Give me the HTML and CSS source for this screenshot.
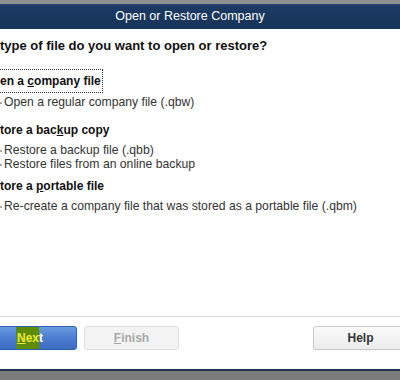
FILE: index.html
```html
<!DOCTYPE html>
<html lang="en">
<head>
    <meta charset="UTF-8">
    <title>Open or Restore Company</title>
    <link rel="stylesheet" href="styles.css">
</head>
<body>
    <div class="top-strip"></div>
    <div class="title-bar">Open or Restore Company</div>

    <div class="content">
        <h2 class="question">type of file do you want to open or restore?</h2>

        <div class="group group-first">
            <div class="group-title"><span class="focus">en a <u>c</u>ompany file</span></div>
            <div class="item">Open a regular company file (.qbw)</div>
        </div>

        <div class="group group-second">
            <div class="group-title">tore a bac<u>k</u>up copy</div>
            <div class="item">Restore a backup file (.qbb)</div>
            <div class="item">Restore files from an online backup</div>
        </div>

        <div class="group">
            <div class="group-title">tore a <u>p</u>ortable file</div>
            <div class="item">Re-create a company file that was stored as a portable file (.qbm)</div>
        </div>
    </div>

    <div class="footer">
        <button class="btn btn-next"><span class="hl"><u>N</u>ex</span>t</button>
        <button class="btn btn-disabled"><u>F</u>inish</button>
        <button class="btn btn-help">Help</button>
    </div>

    <div class="bottom-strip"></div>
</body>
</html>
```

FILE: styles.css
```css
html, body {
    margin: 0;
    height: 380px;
    overflow: hidden;
}
body {
    display: flex;
    flex-direction: column;
    background: #ffffff;
    font-family: 'Liberation Sans', Arial, sans-serif;
    color: #222222;
}
.top-strip {
    height: 4px;
    background: #8f8f8f;
}
.title-bar {
    height: 25px;
    line-height: 25px;
    text-align: center;
    color: #ffffff;
    font-size: 12.5px;
    padding-right: 20px;
    background: linear-gradient(#2c4b74 0, #1c3a62 2px, #17345a 100%);
}
.content {
    flex: 1;
}
.question {
    margin: 9px 0 0 0;
    font-size: 13px;
    line-height: 16px;
    font-weight: bold;
    color: #111111;
}
.group {
    margin-top: 4px;
}
.group-first {
    margin-top: 16px;
}
.group-second {
    margin-top: 10px;
}
.group-title {
    height: 22px;
    line-height: 22px;
    font-size: 12px;
    font-weight: bold;
    color: #111111;
    margin-bottom: 2px;
}
.group-first .group-title {
    margin-bottom: 3px;
}
.focus {
    border: 1px dotted #333333;
    border-left: none;
    padding: 4px 1px 4px 0;
}
.item {
    font-size: 12.2px;
    line-height: 14px;
    color: #333333;
}
.item::before {
    content: "";
    display: inline-block;
    width: 2px;
    height: 2px;
    background: #a8a8a8;
    margin-right: 2px;
    vertical-align: middle;
}
.footer {
    height: 43px;
    border-top: 1px solid #dcdcdc;
    padding-top: 9px;
    display: flex;
    align-items: flex-start;
    gap: 7px;
}
.btn {
    width: 95px;
    height: 24px;
    border-radius: 3px;
    font-family: 'Liberation Sans', Arial, sans-serif;
    font-size: 12px;
    font-weight: bold;
    padding: 0;
}
.btn u {
    text-decoration: underline;
}
.btn-next {
    margin-left: -18px;
    color: #ffffff;
    border: 1px solid #2f5fb0;
    background: linear-gradient(#6a9be0, #4a7dd0 50%, #3d6cc0);
}
.hl {
    background: #5e8c08;
    color: #eaea30;
    padding: 4px 0 4px 1px;
}
.btn-disabled {
    color: #a9a9a9;
    border: 1px solid #dedede;
    background: #f3f3f3;
}
.btn-help {
    margin-left: auto;
    margin-right: -8px;
    color: #333333;
    border: 1px solid #c8c8c8;
    background: linear-gradient(#fbfbfb, #ececec);
}
.bottom-strip {
    height: 9px;
    border-top: 2px solid #1f3552;
    background: #7c7c7c;
}
```
